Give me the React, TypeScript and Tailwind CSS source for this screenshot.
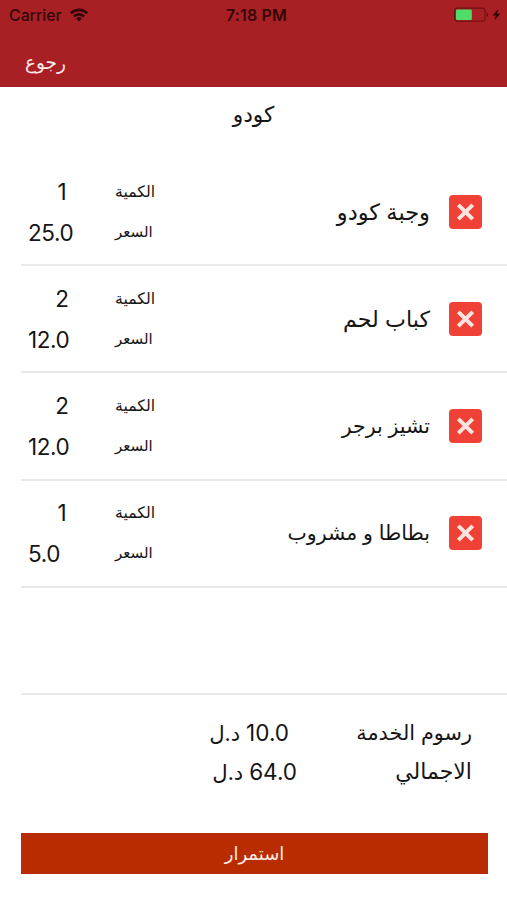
import React, { useState } from 'react';

interface OrderItem {
  id: number;
  name: string;
  nameSize: string;
  quantity: number;
  price: string;
}

const initialItems: OrderItem[] = [
  { id: 1, name: 'وجبة كودو', nameSize: 'text-[22.5px]', quantity: 1, price: '25.0' },
  { id: 2, name: 'كباب لحم', nameSize: 'text-[22.2px]', quantity: 2, price: '12.0' },
  { id: 3, name: 'تشيز برجر', nameSize: 'text-[20.5px]', quantity: 2, price: '12.0' },
  { id: 4, name: 'بطاطا و مشروب', nameSize: 'text-[20.5px]', quantity: 1, price: '5.0' },
];

function StatusBar() {
  return (
    <div className="grid h-[30px] grid-cols-3 items-center pl-[9px] pr-[5px] text-[#330608]">
      <div className="flex items-center gap-[7px]">
        <span className="text-[16px] font-medium leading-[30px] tracking-[-0.1px]">Carrier</span>
        <svg width="20" height="14" viewBox="0 0 20 14" fill="none" stroke="currentColor" strokeWidth="2.7">
          <path d="M1.8 5.2a11.6 11.6 0 0 1 16.4 0" />
          <path d="M4.9 8.5a7.2 7.2 0 0 1 10.2 0" />
          <path d="M10 13.4 7.1 10.5a4.1 4.1 0 0 1 5.8 0z" fill="currentColor" stroke="none" />
        </svg>
      </div>
      <span className="pl-[2px] text-center text-[16px] font-semibold leading-[30px] tracking-[0.15px]">7:18 PM</span>
      <div className="flex items-center justify-end">
        <svg width="48" height="16" viewBox="0 0 48 16" fill="none">
          <rect x="0.6" y="1.1" width="30.5" height="13.2" rx="3" stroke="#6d1113" strokeWidth="1.1" />
          <rect x="2" y="2.4" width="15.8" height="10.6" rx="1" fill="#4fdc68" />
          <path d="M32.6 5.3c2.2.8 2.2 4 0 4.8z" fill="#6d1113" />
          <path d="M44.4 1.8 38.6 8.4h3.2l-1.4 5.2 6-6.8h-3.2z" fill="currentColor" />
        </svg>
      </div>
    </div>
  );
}

function ItemRow({ item, onRemove }: { item: OrderItem; onRemove: (id: number) => void }) {
  return (
    <div className="ml-[21px] flex h-[107.2px] items-center border-b-2 border-[#e9e9e9] pr-[25px]">
      <div className="flex w-[82px] flex-col pl-[7px] text-[22.5px] tracking-[-0.4px]">
        <span className="h-[41px] w-[68px] text-center leading-[41px]">{item.quantity}</span>
        <span className="h-[41px] leading-[41px]">{item.price}</span>
      </div>
      <div className="flex flex-col pl-[12px]">
        <span className="h-[41px] text-[15.7px] leading-[41px]">الكمية</span>
        <span className="h-[41px] text-[15px] leading-[40px]">السعر</span>
      </div>
      <div className="flex flex-1 items-center justify-end gap-[19px]">
        <span dir="rtl" className={`leading-[34px] ${item.nameSize}`}>
          {item.name}
        </span>
        <button onClick={() => onRemove(item.id)} className="h-[34px] w-[33px] rounded-[4px] bg-[#ef4136]">
          <svg width="33" height="34" viewBox="0 0 33 34" stroke="#fde3e0" strokeWidth="4">
            <path d="M9.3 9.8 23.7 24.2M23.7 9.8 9.3 24.2" />
          </svg>
        </button>
      </div>
    </div>
  );
}

export default function App() {
  const [items, setItems] = useState(initialItems);

  const handleRemove = (id: number) => {
    setItems(items.filter((item) => item.id !== id));
  };

  return (
    <div className="flex h-[900px] w-[507px] flex-col bg-white font-['Inter','DejaVu_Sans',sans-serif] text-[#151515]">
      <header className="h-[87px] bg-[#a92024]">
        <StatusBar />
        <button className="ml-[25px] mt-[12px] block text-[18.5px] leading-[40px] text-[#fbe9e9]">رجوع</button>
      </header>

      <h1 className="h-[72px] text-center text-[21.7px] leading-[54px]">كودو</h1>

      <div className="h-[536px]">
        {items.map((item) => (
          <ItemRow key={item.id} item={item} onRemove={handleRemove} />
        ))}
        <div className="ml-[21px] h-[107.2px] border-b-2 border-[#e9e9e9]" />
      </div>

      {/* Totals */}
      <div dir="rtl" className="flex flex-col pr-[35px] pt-[18px] text-[20.8px]">
        <div className="flex h-[39px] items-center">
          <span className="w-[183px]">رسوم الخدمة</span>
          <span className="text-[21.2px]">
            <span className="text-[22.5px] tracking-[-0.3px]">10.0</span> د.ل
          </span>
        </div>
        <div className="flex h-[39px] items-center">
          <span className="w-[175px] text-[22px]">الاجمالي</span>
          <span className="text-[21.2px]">
            <span className="text-[22.5px]">64.0</span> د.ل
          </span>
        </div>
      </div>

      <button className="ml-[21px] mt-[42px] h-[41px] w-[467px] bg-[#b92b00] text-[18px] leading-[41px] text-[#fdece6]">
        استمرار
      </button>
    </div>
  );
}
